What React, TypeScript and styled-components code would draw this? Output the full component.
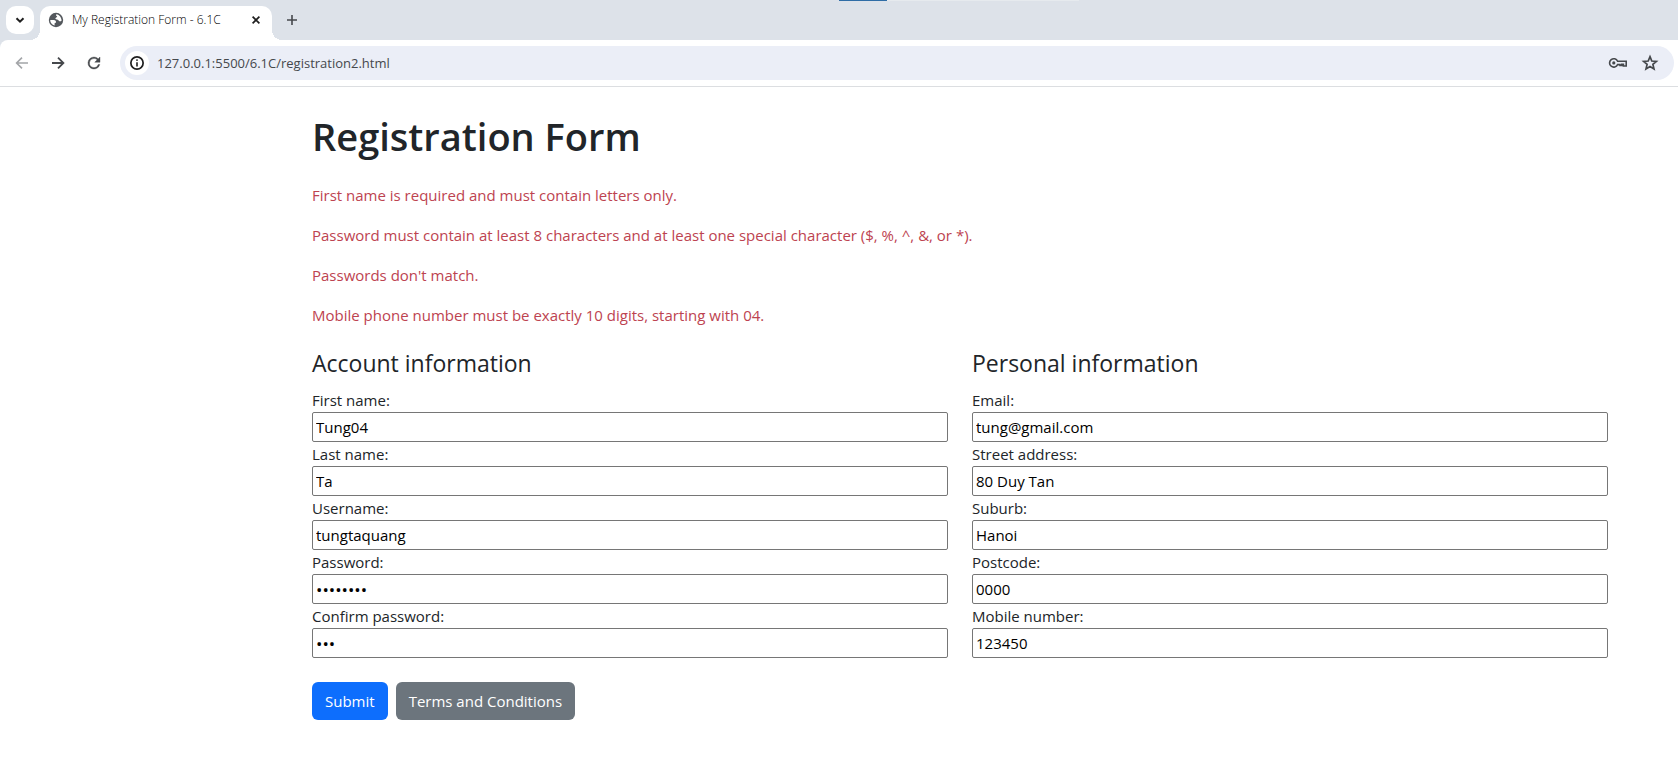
import React, { useId } from "react";
import styled, { createGlobalStyle } from "styled-components";

const GlobalStyle = createGlobalStyle`
  *, *::before, *::after { box-sizing: border-box; }
  body {
    margin: 0;
    background: #fff;
    color: #212529;
    font-family: "Open Sans", "Noto Sans", sans-serif;
    font-size: 15px;
    line-height: 24px;
  }
  button, input { font-family: inherit; }
`;

/* ---------- browser frame ---------- */

const TabStrip = styled.header`
  position: relative;
  display: flex;
  align-items: flex-end;
  height: 40px;
  padding-left: 6px;
  background: #dde2e9;
`;

const LoadingMark = styled.span`
  position: absolute;
  top: 0;
  left: 50%;
  width: 240px;
  height: 1px;
  background: linear-gradient(to right, #2f6da6 48px, #e6eaee 48px);
`;

const IconButton = styled.button<{ $size: number; $color?: string }>`
  display: flex;
  flex: none;
  align-items: center;
  justify-content: center;
  width: ${(p) => p.$size}px;
  height: ${(p) => p.$size}px;
  padding: 0;
  border: 0;
  border-radius: 50%;
  background: transparent;
  color: ${(p) => p.$color ?? "#45484c"};
`;

const TabSearch = styled(IconButton)`
  align-self: center;
  margin-right: 6px;
  border-radius: 10px;
  background: #fff;
`;

const Tab = styled.div`
  position: relative;
  display: flex;
  align-items: center;
  width: 232px;
  height: 34px;
  padding: 0 8px 6px;
  border-radius: 10px 10px 0 0;
  background: #fff;

  &::before,
  &::after {
    content: "";
    position: absolute;
    bottom: 0;
    width: 10px;
    height: 10px;
  }
  &::before {
    right: 100%;
    background: radial-gradient(circle at 0 0, transparent 10px, #fff 10px);
  }
  &::after {
    left: 100%;
    background: radial-gradient(circle at 100% 0, transparent 10px, #fff 10px);
  }
`;

const TabTitle = styled.span`
  flex: 1;
  margin-left: 8px;
  color: #000;
  font-size: 12px;
  font-weight: 300;
  line-height: 16px;
  white-space: nowrap;
`;

const NewTab = styled(IconButton)`
  align-self: center;
  margin-left: 6px;
`;

const ToolbarBack = styled.div`
  background: #dde2e9;
`;

const Toolbar = styled.nav`
  display: flex;
  align-items: center;
  gap: 8px;
  height: 47px;
  padding: 0 4px 1px 8px;
  border-bottom: 1px solid #dcdee1;
  border-radius: 8px 0 0 0;
  background: #fff;
`;

const AddressBar = styled.div`
  display: flex;
  flex: 1;
  align-items: center;
  height: 34px;
  margin-left: 4px;
  padding: 0 8px 0 5px;
  border-radius: 17px;
  background: #ebeef7;
`;

const SiteInfo = styled(IconButton)`
  background: #fff;
`;

const AddressInput = styled.input`
  flex: 1;
  min-width: 0;
  margin: 0 8px;
  padding: 0;
  border: 0;
  outline: 0;
  background: transparent;
  color: #45484c;
  font-size: 13px;
  line-height: 20px;
`;

/* ---------- page ---------- */

const Page = styled.main`
  padding: 25px 58px 40px 300px;
`;

const Container = styled.div`
  max-width: 1320px;
  padding: 0 12px;
`;

const Title = styled.h1`
  margin: 0 0 23px;
  font-size: 38px;
  font-weight: 600;
  line-height: 48px;
`;

const Errors = styled.div`
  display: flex;
  flex-direction: column;
  gap: 16px;
  margin-bottom: 22px;
  color: #bd4350;
`;

const ErrorText = styled.p`
  margin: 0;
`;

const Columns = styled.div`
  display: grid;
  grid-template-columns: 1fr 1fr;
  gap: 24px;
`;

const Group = styled.section`
  display: flex;
  flex-direction: column;
`;

const GroupTitle = styled.h2`
  margin: 0 0 10px;
  font-size: 23px;
  font-weight: 400;
  line-height: 29px;
`;

const Label = styled.label`
  height: 24px;
`;

const TextInput = styled.input`
  width: 100%;
  height: 30px;
  padding: 1px 3px;
  border: 1px solid #767676;
  border-radius: 2px;
  background: #fff;
  color: #000;
  font-size: 15px;

  &[type="password"] {
    font-size: 17px;
  }
`;

const Actions = styled.div`
  display: flex;
  gap: 8px;
  margin-top: 24px;
`;

const ActionButton = styled.button<{ $tone: "primary" | "secondary" }>`
  height: 38px;
  padding: 0 13px;
  border: 0;
  border-radius: 6px;
  background: ${(p) => (p.$tone === "primary" ? "#0d6efd" : "#6c757d")};
  color: #fff;
  font-size: 15px;
  line-height: 24px;
`;

/* ---------- icons ---------- */

const Icon = ({ size, children }: { size: number; children: React.ReactNode }) => (
  <svg width={size} height={size} viewBox="0 0 24 24" fill="currentColor" aria-hidden="true">
    {children}
  </svg>
);

const Stroke = ({ size, d, width = 2 }: { size: number; d: string; width?: number }) => (
  <svg width={size} height={size} viewBox="0 0 16 16" fill="none" stroke="currentColor" strokeWidth={width} aria-hidden="true">
    <path d={d} />
  </svg>
);

const Globe = () => (
  <svg width="16" height="16" viewBox="0 0 16 16" aria-hidden="true">
    <circle cx="8" cy="8" r="7.2" fill="#54585d" />
    <path
      d="M8.4 2.2 C7.8 3 8 4 9.2 4.2 C9 5.6 7.6 5.4 7.2 6.6 L8.6 7.4 C10.6 7.2 10.6 9.2 12 9.4 L13.6 8.8 C13.5 5.4 11.6 2.7 8.4 2.2 Z M2.2 8 L5.6 8 C7.6 8.2 8.2 9.2 8 10.4 L6.6 11.2 L6.6 13.5 C4 12.9 2.2 10.7 2.2 8 Z"
      fill="#fff"
    />
  </svg>
);

const Key = () => (
  <svg width="20" height="20" viewBox="0 0 20 20" fill="none" stroke="currentColor" strokeWidth="1.6" aria-hidden="true">
    <path d="M9.6 8.2 H18.2 V13 H15.4 V11.4 H13.8 V12.4 H12 V11.6 H9.6 A4.2 4.2 0 1 1 9.6 8.2 Z" />
    <circle cx="5.8" cy="9.9" r="1.6" fill="currentColor" stroke="none" />
  </svg>
);

const Star = () => (
  <svg width="20" height="20" viewBox="0 0 20 20" fill="none" stroke="currentColor" strokeWidth="1.7" aria-hidden="true">
    <path d="M10 3.7 L11.8 8 L16.4 8.4 L12.9 11.4 L14 16 L10 13.5 L6 16 L7.1 11.4 L3.6 8.4 L8.2 8 Z" />
  </svg>
);

/* ---------- form ---------- */

type FieldProps = { label: string; value: string; type?: string };

const Field = ({ label, value, type = "text" }: FieldProps) => {
  const id = useId();
  return (
    <>
      <Label htmlFor={id}>{label}</Label>
      <TextInput id={id} type={type} defaultValue={value} />
    </>
  );
};

const errors = [
  "First name is required and must contain letters only.",
  "Password must contain at least 8 characters and at least one special character ($, %, ^, &, or *).",
  "Passwords don't match.",
  "Mobile phone number must be exactly 10 digits, starting with 04.",
];

const groups: { title: string; fields: FieldProps[] }[] = [
  {
    title: "Account information",
    fields: [
      { label: "First name:", value: "Tung04" },
      { label: "Last name:", value: "Ta" },
      { label: "Username:", value: "tungtaquang" },
      { label: "Password:", value: "tung1234", type: "password" },
      { label: "Confirm password:", value: "tun", type: "password" },
    ],
  },
  {
    title: "Personal information",
    fields: [
      { label: "Email:", value: "tung@gmail.com", type: "email" },
      { label: "Street address:", value: "80 Duy Tan" },
      { label: "Suburb:", value: "Hanoi" },
      { label: "Postcode:", value: "0000" },
      { label: "Mobile number:", value: "123450" },
    ],
  },
];

export default function App() {
  return (
    <>
      <GlobalStyle />
      <TabStrip>
        <TabSearch $size={28} $color="#1f1f1f" aria-label="Search tabs">
          <Stroke size={16} d="M4.5 6.2 L8 9.7 L11.5 6.2" />
        </TabSearch>
        <Tab>
          <Globe />
          <TabTitle>My Registration Form - 6.1C</TabTitle>
          <IconButton $size={16} $color="#1f1f1f" aria-label="Close tab">
            <Stroke size={16} width={1.7} d="M4.6 4.6 L11.4 11.4 M11.4 4.6 L4.6 11.4" />
          </IconButton>
        </Tab>
        <NewTab $size={28} aria-label="New tab">
          <Stroke size={16} width={1.6} d="M8 3 V13 M3 8 H13" />
        </NewTab>
        <LoadingMark />
      </TabStrip>
      <ToolbarBack>
        <Toolbar>
          <IconButton $size={28} $color="#a3a5a8" aria-label="Back">
            <Stroke size={16} width={1.6} d="M14 8 H3 M8 2.6 L2.6 8 L8 13.4" />
          </IconButton>
          <IconButton $size={28} aria-label="Forward">
            <Stroke size={16} width={1.8} d="M2 8 H13 M8 2.6 L13.4 8 L8 13.4" />
          </IconButton>
          <IconButton $size={28} aria-label="Reload">
            <Icon size={18}>
              <path d="M17.65 6.35A7.96 7.96 0 0 0 12 4a8 8 0 1 0 7.73 10h-2.08A6 6 0 1 1 12 6c1.66 0 3.14.69 4.22 1.78L13 11h7V4z" stroke="currentColor" strokeWidth="0.5" />
            </Icon>
          </IconButton>
          <AddressBar>
            <SiteInfo $size={24} $color="#1f1f1f" aria-label="View site information">
              <Icon size={16}>
                <path d="M10.8 17.4h2.4v-6.6h-2.4zm1.2-8.4a1.4 1.4 0 1 0 0-2.8 1.4 1.4 0 0 0 0 2.8zM12 1.5a10.5 10.5 0 1 0 0 21 10.5 10.5 0 0 0 0-21zm0 18.4a7.9 7.9 0 1 1 0-15.8 7.9 7.9 0 0 1 0 15.8z" />
              </Icon>
            </SiteInfo>
            <AddressInput aria-label="Address" defaultValue="127.0.0.1:5500/6.1C/registration2.html" />
            <IconButton $size={32} aria-label="Passwords">
              <Key />
            </IconButton>
            <IconButton $size={32} aria-label="Bookmark this tab">
              <Star />
            </IconButton>
          </AddressBar>
        </Toolbar>
      </ToolbarBack>
      <Page>
        <Container>
          <Title>Registration Form</Title>
          <form onSubmit={(e) => e.preventDefault()}>
            <Errors role="alert">
              {errors.map((text) => (
                <ErrorText key={text}>{text}</ErrorText>
              ))}
            </Errors>
            <Columns>
              {groups.map((group) => (
                <Group key={group.title}>
                  <GroupTitle>{group.title}</GroupTitle>
                  {group.fields.map((field) => (
                    <Field key={field.label} {...field} />
                  ))}
                </Group>
              ))}
            </Columns>
            <Actions>
              <ActionButton type="submit" $tone="primary">Submit</ActionButton>
              <ActionButton type="button" $tone="secondary">Terms and Conditions</ActionButton>
            </Actions>
          </form>
        </Container>
      </Page>
    </>
  );
}
